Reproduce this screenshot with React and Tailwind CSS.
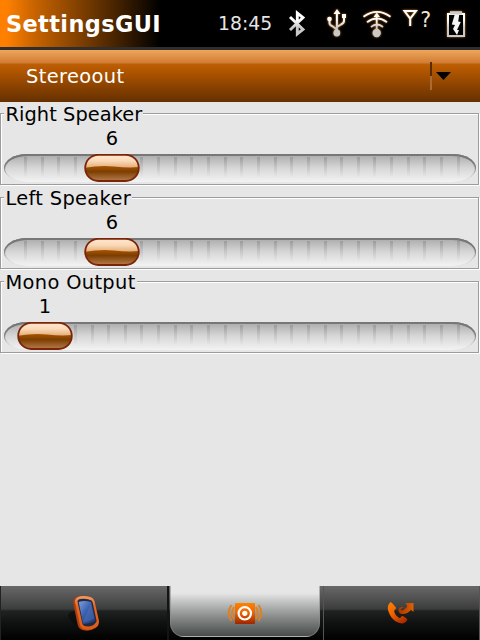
import React from "react";

const TICKS = Array.from({ length: 27 }, (_, i) => i);

function Thumb({ id, left }) {
  return (
    <svg className="absolute top-0 h-7 w-14" style={{ left }} viewBox="0 0 56 28">
      <defs>
        <linearGradient id={id + "a"} x1="0" y1="0" x2="0" y2="1">
          <stop offset="0" stopColor="#ffe8d2" />
          <stop offset="0.25" stopColor="#fbd9b8" />
          <stop offset="0.5" stopColor="#e3aa74" />
        </linearGradient>
        <linearGradient id={id + "b"} x1="0" y1="0" x2="0" y2="1">
          <stop offset="0" stopColor="#a85400" />
          <stop offset="0.35" stopColor="#7c3e00" />
          <stop offset="1" stopColor="#bd8356" />
        </linearGradient>
        <clipPath id={id + "c"}>
          <rect x="1.5" y="1" width="53" height="26" rx="13" />
        </clipPath>
      </defs>
      <g clipPath={`url(#${id}c)`}>
        <rect width="56" height="28" fill={`url(#${id}a)`} />
        <path d="M0 14Q16 11 30 12.5T56 13V28H0Z" fill={`url(#${id}b)`} />
      </g>
      <rect x="1.2" y="0.8" width="53.6" height="26.2" rx="13" fill="none" stroke="#7a2508" strokeWidth="1.8" />
    </svg>
  );
}

function SliderGroup({ id, label, labelClass, value, left }) {
  return (
    <section className="h-[84px] pt-[11px]">
      <div className="mr-px h-[72px] border border-[#9c9c9c] shadow-[inset_1px_1px_0_#fff,1px_1px_0_#fff]">
        <div className={"-mt-[11px] ml-[3px] h-6 w-fit whitespace-nowrap bg-[#e6e6e6] pl-[1.5px] pr-px text-[19.4px] leading-6 " + labelClass}>{label}</div>
        <div className="h-[27px]">
          <div className="w-14 text-center text-[19.4px] leading-[23px]" style={{ marginLeft: left + 3 }}>{value}</div>
        </div>
        <div className="relative ml-[3px] h-7 w-[472px]">
          <div className="flex h-7 justify-between rounded-[24px/14px] bg-linear-to-b from-[#aaa9aa] via-[#d8d7d8] to-[#f4f3f4] pl-[20px] pr-[16px] pt-[3px] shadow-[inset_0_2px_0_#777678,inset_1px_1px_1px_#8b8a8c,inset_-1px_1px_1px_#8b8a8c]">
            {TICKS.map((t) => (
              <i key={t} className="h-5 w-[3px] bg-linear-to-b from-[#9b9a9c] via-[#c5c4c5] to-[#e8e7e8]" />
            ))}
          </div>
          <Thumb id={id} left={left} />
        </div>
      </div>
    </section>
  );
}

function StatusIcons() {
  return (
    <svg className="h-[47px] w-[200px] shrink-0" viewBox="280 0 200 47">
      <defs>
        <linearGradient id="silver" gradientUnits="userSpaceOnUse" x1="0" y1="10" x2="0" y2="37">
          <stop offset="0.35" stopColor="#fff" />
          <stop offset="0.65" stopColor="#c9c9c9" />
        </linearGradient>
        <filter id="glow" x="-30%" y="-30%" width="160%" height="160%" colorInterpolationFilters="sRGB">
          <feDropShadow dx="0" dy="0" stdDeviation="1" floodColor="#c87414" floodOpacity="1" />
        </filter>
      </defs>
      <path d="M290 17L303 29.5L297.3 34V13L303 17.5L290 30" fill="none" stroke="url(#silver)" strokeWidth="2.9" />
      <g filter="url(#glow)" fill="none" stroke="url(#silver)" strokeWidth="2">
        <path d="M336.9 31V12M329.5 20V23Q329.5 25 332 26L336.8 29.5M344 17V21Q344 23 341 24.5L337 27" />
        <path d="M333.5 14L337 9L340.5 14Z" fill="#fff" stroke="none" />
        <circle cx="329.5" cy="19" r="2.3" fill="#fff" stroke="none" />
        <path d="M342 14h4v4h-4z" fill="#fff" stroke="none" />
        <circle cx="336.8" cy="33" r="3.4" fill="#c9c9c9" stroke="none" />
      </g>
      <g filter="url(#glow)" fill="none" stroke="url(#silver)" strokeWidth="1.8">
        <path d="M363.5 16.8Q377 7 390.5 16.8M367 22.2Q377 14.5 387 22.2M371 27Q377 22 383 27M376.7 31V15" />
        <path d="M373.5 17L376.8 12.5L380 17Z" fill="#fff" stroke="none" />
        <circle cx="376.7" cy="33" r="4.2" fill="#c9c9c9" stroke="none" />
      </g>
      <g filter="url(#glow)">
        <path d="M404.5 11H416L410.2 18.5ZM410.2 17V26" fill="none" stroke="#fff" strokeWidth="2" />
      </g>
      <text x="420.3" y="26.8" fontSize="20.5" fill="#f5e4d0">?</text>
      <g filter="url(#glow)">
        <path d="M448 14H464V36H448Z" fill="#000" stroke="url(#silver)" strokeWidth="2" />
        <path d="M450 11.2H462V14.5H450Z" fill="#ccc" />
        <path d="M454.6 15L451.8 24.5L455 25L453 29L457 35L459 30L457 30L460.8 22L458.2 21.5L459.2 15Z" fill="#f4f4f4" />
      </g>
    </svg>
  );
}

function PhoneIcon() {
  return (
    <svg className="h-[40px] w-[40px]" viewBox="63.5 593 40 40">
      <defs>
        <linearGradient id="screen" x1="0" y1="0" x2="1" y2="1">
          <stop offset="0" stopColor="#80a0df" />
          <stop offset="0.45" stopColor="#395fae" />
          <stop offset="1" stopColor="#203874" />
        </linearGradient>
        <linearGradient id="case" x1="0" y1="0" x2="0" y2="1">
          <stop offset="0" stopColor="#ef9c68" />
          <stop offset="0.3" stopColor="#e96722" />
          <stop offset="1" stopColor="#df5a16" />
        </linearGradient>
      </defs>
      <path d="M75 611Q66 612 68 617Q71 623 80 628Z" fill="#080a0a" opacity="0.6" />
      <path d="M76 597Q81 594.5 90 597Q93 598 93.5 601L98 622Q98 626 95 628Q89 632 82 630Q78 629 77 624L72.5 602Q72.5 599 76 597Z" fill="#a84010" />
      <path d="M77.5 597Q82 595 90 597Q93 598 94 601L98.5 621Q98.6 626 95 627.5Q89 631 83 629Q80 628 79.2 624L74.5 602Q74 599 77.5 597Z" fill="url(#case)" />
      <path d="M77 601.5Q77 599.5 80 599Q86 598 91 600.5L92 602L96.2 621Q94 626 88 626.5Q83 626.5 82 624Z" fill="#202b40" />
      <path d="M78.2 602Q84 600 90.6 602L94.8 620.5Q91 623.5 82.5 623.8Z" fill="url(#screen)" />
      <path d="M90 604L82.5 622Q90 621.5 94 618Z" fill="#6684c4" opacity="0.3" />
    </svg>
  );
}

function SpeakerIcon() {
  return (
    <svg className="h-[30px] w-[40px]" viewBox="225 598 40 30">
      <defs>
        <linearGradient id="speaker" x1="0" y1="0" x2="0" y2="1">
          <stop offset="0" stopColor="#ff8200" />
          <stop offset="0.45" stopColor="#ed6500" />
          <stop offset="1" stopColor="#9d2500" />
        </linearGradient>
      </defs>
      <rect x="235" y="603" width="20" height="21" rx="1" fill="url(#speaker)" />
      <circle cx="244.8" cy="613.3" r="6.2" fill="none" stroke="#fff" strokeWidth="2.2" />
      <circle cx="244.8" cy="613.3" r="2.6" fill="#fff" />
      <path d="M234 607Q230.5 613 234 619M231.5 605Q225.8 613 231.5 621M256 607Q259.5 613 256 619M258.5 605Q264.2 613 258.5 621" fill="none" stroke="#e08020" strokeWidth="2" />
    </svg>
  );
}

function CallIcon() {
  return (
    <svg className="h-[30px] w-[30px]" viewBox="386.5 598 30 30">
      <defs>
        <linearGradient id="call" x1="0" y1="0" x2="0.7" y2="1">
          <stop offset="0" stopColor="#ff8500" />
          <stop offset="0.5" stopColor="#f06000" />
          <stop offset="1" stopColor="#ae2b00" />
        </linearGradient>
        <linearGradient id="arrow" x1="0" y1="0" x2="1" y2="0">
          <stop offset="0" stopColor="#a83500" />
          <stop offset="1" stopColor="#e36000" />
        </linearGradient>
      </defs>
      <path d="M390.3 602Q393 604 395.5 607.5Q396 609 393.6 610.5Q394 615.5 399.5 618.2Q401 615.7 402.3 616Q405 617 407 619.5Q405 623.5 401 623.4Q395 622.5 391 617.5Q386.5 611 387.5 606Q388.5 603 390.3 602Z" fill="url(#call)" />
      <path d="M405 603H413V612L410.5 609.7Q405 615.8 399.5 613.4Q397 611.5 398.5 608Q400 606.5 403 607L400.2 609.4Q402 612 406.8 606.5Z" fill="url(#arrow)" />
    </svg>
  );
}

export default function App() {
  return (
    <div className="flex h-[640px] w-[480px] flex-col overflow-hidden bg-[#e6e6e6] font-['DejaVu_Sans',sans-serif] text-black">
      <header className="flex h-[50px] shrink-0 border-b-[3px] border-[#2e2e2e] bg-[linear-gradient(90deg,#ff8000_0,#ff8000_6px,#c86400_34px,#693400_94px,#000_160px)]">
        <h1 className="w-[218px] pl-[6px] text-[22.4px] font-bold leading-[48px] tracking-[0.4px] text-white">SettingsGUI</h1>
        <div className="w-[62px] whitespace-nowrap text-[18.8px] leading-[47px] text-[#e5e5e5]">18:45</div>
        <StatusIcons />
      </header>
      <div className="flex h-[52px] shrink-0 items-center bg-[linear-gradient(#efa65c_0,#cf7d33_13px,#be5f04_14px,#b55800_19px,#653000_52px)] pl-[26px]">
        <span className="w-[404px] pt-[2px] text-[19.4px] tracking-[0.4px] text-white">Stereoout</span>
        <div className="w-[2px]">
          <div className="h-[14px] bg-[#5b2b00]" />
          <div className="h-[14px] bg-[#ac6a30]" />
        </div>
        <svg className="ml-[4px] h-[8px] w-[16px]" viewBox="0 0 16 8"><path d="M0 0H15L7.5 8Z" /></svg>
      </div>
      <main className="flex-1">
        <SliderGroup id="right" label="Right Speaker" labelClass="tracking-[0.05px]" value={6} left={80} />
        <SliderGroup id="left" label="Left Speaker" labelClass="tracking-[0.33px]" value={6} left={80} />
        <SliderGroup id="mono" label="Mono Output" labelClass="tracking-[0.35px]" value={1} left={13} />
      </main>
      <nav className="flex h-[54px] shrink-0 bg-[linear-gradient(#686868_0,#3b3d3c_23px,#202221_25px,#111312_36px,#000_54px)]">
        <div className="flex w-[169px] justify-center border-l border-r-2 border-l-[#222] border-r-[#141414] pt-[7px]">
          <PhoneIcon />
        </div>
        <div className="w-[152px] px-px">
          <div className="flex h-[51px] w-[150px] justify-center rounded-b-[14px] border-x border-b border-[#8a8c8b]/60 bg-[linear-gradient(#e6e6e6_7px,#b5b8b6_19px,#858886_32px,#444846_51px)] pt-[12px]">
            <SpeakerIcon />
          </div>
        </div>
        <div className="ml-[2px] flex w-[157px] justify-center border-x border-[#555] pt-[12px]">
          <CallIcon />
        </div>
      </nav>
    </div>
  );
}
